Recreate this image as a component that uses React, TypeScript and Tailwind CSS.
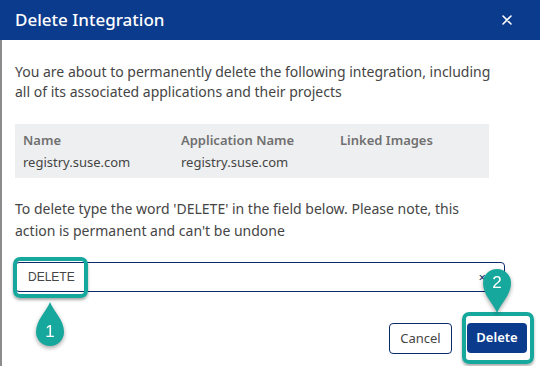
import { useState } from "react";

function Pin({ label, down }: { label: string; down?: boolean }) {
  // teardrop marker, circle r=14, tip 30px from centre
  return (
    <div className="relative w-[32px] h-[48px] drop-shadow-[0_2px_2px_rgba(0,0,0,0.35)]">
      <svg width="32" height="48" viewBox="0 0 32 48" className={down ? "" : "rotate-180"}>
        <path
          d="M16 46 C12 36 2 28 2 16 A14 14 0 0 1 30 16 C30 28 20 36 16 46 Z"
          fill="#17a89d"
        />
      </svg>
      <span
        className={
          "absolute left-0 w-[32px] text-center text-white text-[17px] leading-[20px] font-['Liberation_Sans',sans-serif] " +
          (down ? "top-[6px]" : "top-[22px]")
        }
      >
        {label}
      </span>
    </div>
  );
}

export default function App() {
  const [value, setValue] = useState("DELETE");

  return (
    <div className="relative w-[540px] h-[366px] overflow-hidden bg-white font-['Noto_Sans',sans-serif] text-[#454545]">
      <div className="h-[40px] bg-[#0b3b8c] flex items-center justify-between pl-[15px] pr-[28px]">
        <div className="text-white text-[17px] font-medium">Delete Integration</div>
        <svg width="10" height="10" viewBox="0 0 10 10">
          <path d="M1 1 L9 9 M9 1 L1 9" stroke="white" strokeWidth="1.6" strokeLinecap="round" />
        </svg>
      </div>

      <div className="border-l-2 border-[#8c8c8c] h-[326px] pl-[13px] pr-[13px]">
        <p className="pt-[22px] w-[478px] text-[14px] leading-[20px]">
          You are about to permanently delete the following integration, including all of its
          associated applications and their projects
        </p>

        <div className="mt-[22px] w-[474px] bg-[#eeeff0] pl-[8px] pt-[5px] pb-[5px] text-[13px] leading-[22px] grid grid-cols-[158px_159px_1fr]">
          <div className="font-semibold text-[#707070]">Name</div>
          <div className="font-semibold text-[#707070]">Application Name</div>
          <div className="font-semibold text-[#707070]">Linked Images</div>
          <div>registry.suse.com</div>
          <div>registry.suse.com</div>
          <div></div>
        </div>

        <p className="mt-[20px] w-[478px] text-[14px] leading-[22px]">
          To delete type the word 'DELETE' in the field below. Please note, this action is
          permanent and can't be undone
        </p>

        <div className="mt-[20px] w-[490px] h-[30px] border border-[#0b2a6b] rounded-[4px] flex items-center pl-[12px] pr-[18px]">
          <input
            value={value}
            onChange={(e) => setValue(e.target.value)}
            className="flex-1 outline-none text-[12px] text-[#454545] bg-transparent font-['Liberation_Sans',sans-serif]"
          />
          <span className="text-[#0b2a6b] text-[13px] leading-none">×</span>
        </div>

        <div className="mt-[31px] flex justify-end gap-[15px]">
          <button className="w-[63px] h-[31px] border border-[#0b2a6b] rounded-[4px] bg-white text-[13px] text-[#454545]">
            Cancel
          </button>
          <button className="w-[60px] h-[30px] rounded-[4px] bg-[#0b3b8c] text-white text-[13px] font-semibold">
            Delete
          </button>
        </div>
      </div>

      {/* callout 1 */}
      <div className="absolute left-[13px] top-[257px] w-[75px] h-[41px] border-[4px] border-[#17a89d] rounded-[7px] shadow-[0_2px_3px_rgba(0,0,0,0.35)]" />
      <div className="absolute left-[34px] top-[300px]">
        <Pin label="1" />
      </div>

      {/* callout 2 */}
      <div className="absolute left-[462px] top-[312px] w-[72px] h-[52px] border-[4px] border-[#17a89d] rounded-[7px] shadow-[0_2px_3px_rgba(0,0,0,0.35)]" />
      <div className="absolute left-[481px] top-[267px]">
        <Pin label="2" down />
      </div>
    </div>
  );
}
